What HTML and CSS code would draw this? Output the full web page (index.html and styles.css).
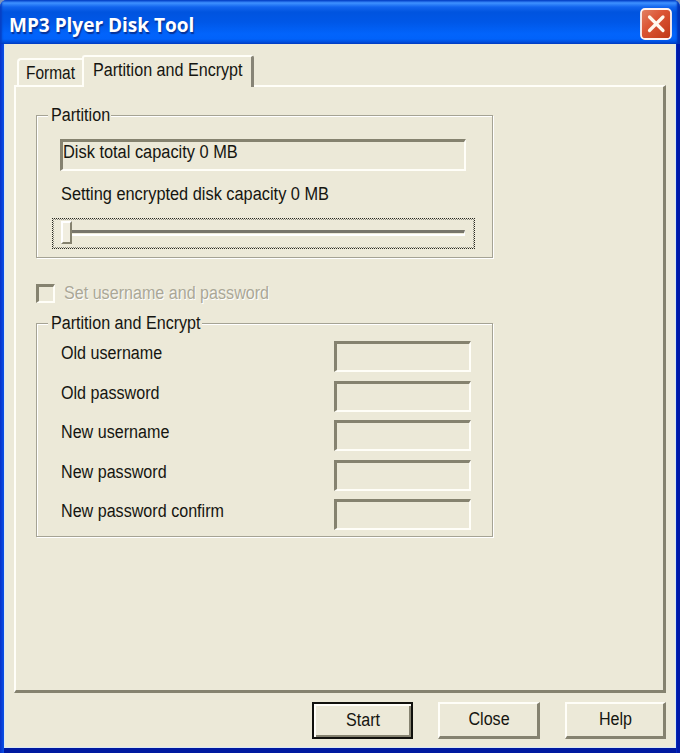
FILE: index.html
```
<!DOCTYPE html>
<html lang="en">
<head>
<meta charset="utf-8">
<title>MP3 Plyer Disk Tool</title>
<link rel="stylesheet" href="styles.css">
</head>
<body>
<div class="window">
  <header class="titlebar">
    <h1><span>MP3 Plyer Disk Tool</span></h1>
    <button class="close" aria-label="Close window">
      <svg viewBox="0 0 32 32" width="32" height="32">
        <defs><linearGradient id="red" x1="0" y1="0" x2="1" y2="1"><stop offset="0" stop-color="#e38468"/><stop offset=".4" stop-color="#dc5636"/><stop offset="1" stop-color="#bf3614"/></linearGradient></defs>
        <rect x="1" y="1" width="30" height="30" rx="4" fill="url(#red)" stroke="#fff3f0" stroke-width="1.8"/>
        <path d="M9.5 9 23 22.5M23 9 9.5 22.5" stroke="#fff8ed" stroke-width="3.2" stroke-linecap="round"/>
      </svg>
    </button>
  </header>
  <main class="client">
    <nav class="tabs">
      <div class="tab"><span class="t">Format</span></div>
      <div class="tab active"><span class="t">Partition and Encrypt</span></div>
    </nav>
    <section class="panel">
      <div class="group partition">
        <div class="legend"><span class="t">Partition</span></div>
        <div class="sunken capacity"><span class="t">Disk total capacity 0 MB</span></div>
        <div class="setting"><span class="t">Setting encrypted disk capacity 0 MB</span></div>
        <div class="slider"><div class="thumb"></div><div class="track"></div></div>
      </div>
      <div class="check"><div class="sunken box"></div><span class="t">Set username and password</span></div>
      <div class="group encrypt">
        <div class="legend wide"><span class="t">Partition and Encrypt</span></div>
        <div class="row"><span class="t">Old username</span><div class="sunken input"></div></div>
        <div class="row"><span class="t">Old password</span><div class="sunken input"></div></div>
        <div class="row"><span class="t">New username</span><div class="sunken input"></div></div>
        <div class="row"><span class="t">New password</span><div class="sunken input"></div></div>
        <div class="row"><span class="t">New password confirm</span><div class="sunken input"></div></div>
      </div>
    </section>
    <footer class="actions">
      <div class="btn default"><span class="t">Start</span></div>
      <div class="btn"><span class="t">Close</span></div>
      <div class="btn"><span class="t">Help</span></div>
    </footer>
  </main>
</div>
</body>
</html>
```
FILE: styles.css
```
* { box-sizing: border-box; }
body { margin: 0; width: 680px; height: 753px; overflow: hidden; background: #8094b8; font: 18px/22px "Liberation Sans", Arial, sans-serif; color: #151510; }
.window { height: 753px; display: flex; flex-direction: column; background: linear-gradient(90deg, #0831c8, #0a50e8 4px, #0a50e8 675px, #0019a8 677px); border-radius: 7px 7px 0 0; overflow: hidden; }
.titlebar { height: 44px; flex: none; display: flex; justify-content: space-between; padding: 8px 8px 0 9px; background: linear-gradient(180deg, #0548cf 0, #3e91ff 3px, #1265ee 7px, #0054df 12px, #0057e7 22px, #0264fc 34px, #0162fa 39px, #0043ca 44px); box-shadow: inset -3px 0 2px #0033b8, inset 2px 0 2px #0740c4; }
h1 { margin: 5px 0 0; font: bold 20px/24px "Open Sans", "Noto Sans", sans-serif; color: #fff; text-shadow: 1px 2px 1px #063398; white-space: nowrap; }
h1 span { display: inline-block; transform: scaleX(.95); transform-origin: left; }
.close { width: 32px; height: 32px; padding: 0; border: 0; background: none; }
.close svg { display: block; }
.client { flex: 1; margin: 0 4px 5px; padding: 11px 9px 0 9px; background: #ece9d8; border: solid #d9e8f4; border-width: 0 1px 1px; box-shadow: 0 5px 0 #0019a0; }
.t { display: inline-block; transform: scaleX(.895); transform-origin: left; white-space: nowrap; }
.tabs { display: flex; align-items: flex-end; height: 32px; padding-left: 3px; position: relative; z-index: 1; }
.tab { width: 65px; height: 28px; padding: 2px 0 0 7px; margin-bottom: 1px; border: 2px solid #fffef8; border-width: 2px 0 0 2px; border-radius: 4px 0 0; }
.tab:first-child .t { transform: scaleX(.86); }
.tab.active { width: 172px; height: 32px; margin: 0; padding: 2px 0 0 9px; background: #ece9d8; border-right: 3px solid #878476; border-radius: 3px 3px 0 0; }
.panel { height: 608px; margin-top: -2px; padding: 19px 0 0 20px; border: solid; border-width: 2px 3px 3px 2px; border-color: #fffef8 #85826f #85826f #fffef8; }
.group { width: 457px; border: 1px solid #a5a394; box-shadow: 1px 1px 0 #fff, inset 1px 1px 0 #fff; }
.legend { width: 63px; height: 22px; margin: -11px 0 0 11px; padding-left: 3px; background: #ece9d8; }
.legend.wide { width: 154px; margin-bottom: 6px; }
.legend .t { position: relative; top: -1px; }
.partition { height: 143px; margin-top: 9px; }
.sunken { border: 2px solid; border-width: 3px 2px 2px 3px; border-color: #85826f #fffef8 #fffef8 #85826f; }
.capacity { width: 406px; height: 32px; margin: 12px 0 0 23px; padding: 0; line-height: 20px; }
.capacity .t { transform: scaleX(.91); }
.setting { margin: 12px 0 0 24px; height: 22px; }
.setting .t { transform: scaleX(.908); }
.slider { width: 423px; height: 31px; margin: 13px 0 0 15px; border: 1px dotted #25251f; outline: 1px dotted #25251f80; outline-offset: -2px; display: flex; padding: 1px 9px 0 8px; }
.thumb { width: 11px; height: 23px; margin-top: 1px; background: #f1eee0; border: 2px solid; border-color: #fff #85826f #85826f #fff; }
.track { flex: 1; height: 6px; margin-top: 10px; border: solid; border-width: 3px 1px 2px 0; border-color: #77756a #fff #fff; }
.check { display: flex; align-items: center; height: 22px; margin-top: 24px; color: #aaa797; text-shadow: 1px 1px 0 #fff; }
.box { width: 19px; height: 19px; margin-right: 9px; }
.encrypt { height: 214px; margin-top: 19px; }
.row { display: flex; justify-content: space-between; align-items: flex-start; padding: 0 21px 0 24px; margin-bottom: 8.5px; height: 31px; }
.row .t { margin-top: 1px; }
.input { width: 137px; height: 31px; }
.actions { display: flex; padding: 9px 0 0 298px; gap: 25px; }
.btn { width: 102px; height: 37px; display: flex; align-items: center; justify-content: center; border: 2px solid; border-width: 2px 3px 3px 2px; border-color: #fffef8 #858270 #858270 #fffef8; padding-left: 1px; }
.btn .t { position: relative; top: -1px; transform-origin: center; }
.btn.default { border: 2px solid #11110d; box-shadow: inset 2px 2px 0 #fffef8, inset -2px -2px 0 #858270; }
```
